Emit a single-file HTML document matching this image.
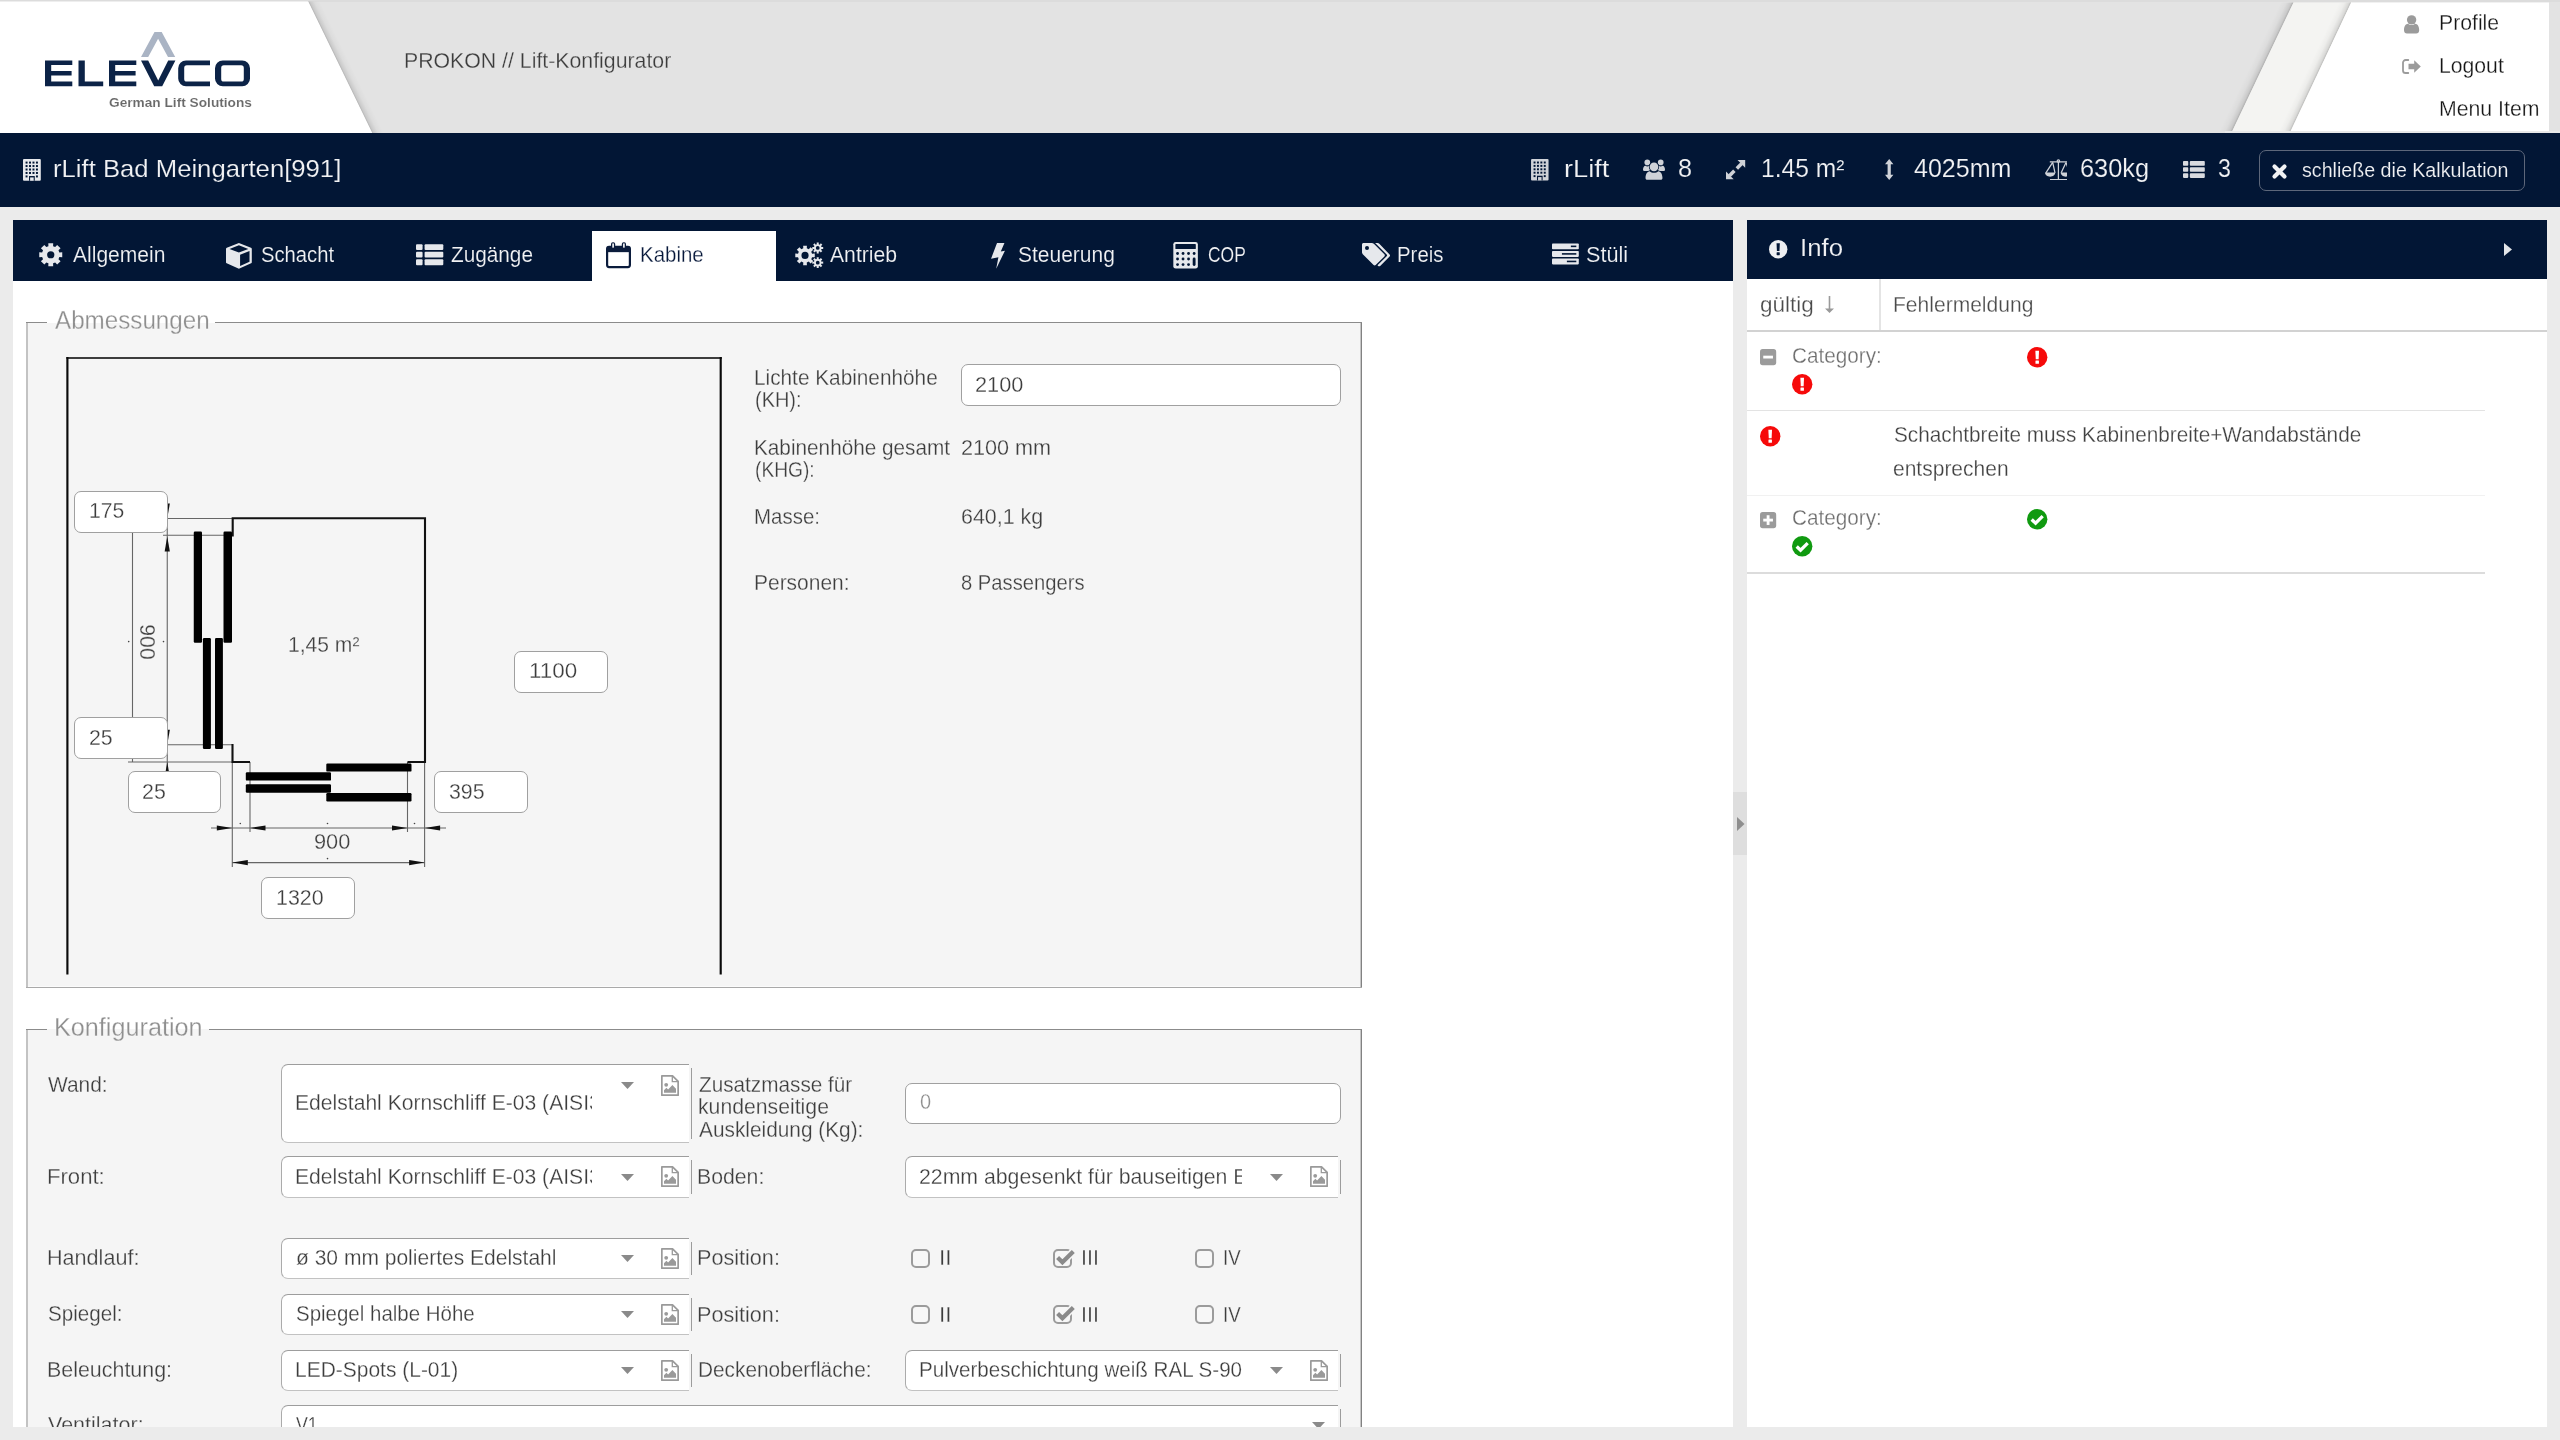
<!DOCTYPE html>
<html><head><meta charset="utf-8"><title>PROKON</title><style>
*{margin:0;padding:0;box-sizing:border-box}
html,body{width:2560px;height:1440px;overflow:hidden;background:#ebebeb;font-family:"Liberation Sans",sans-serif}
.a{position:absolute}
.t{position:absolute;white-space:nowrap;line-height:1;transform-origin:0 0;display:block}
.clip{position:absolute;overflow:hidden}
svg{position:absolute;overflow:visible}
.inp{position:absolute;background:#fff;border:1.8px solid #a0a0a0;border-radius:7px}
.cb{position:absolute;background:#fff;border-top:1.5px solid #9d9d9d;border-bottom:1.5px solid #c2c2c2;border-left:1.5px solid #ababab;border-radius:7px 0 0 7px}
.vl{position:absolute;width:1.5px;background:#9c9c9c}
.chk{position:absolute;width:19px;height:19px;border:2px solid #9b9b9b;border-radius:5px;background:#f7f7f7}
</style></head><body><div class="a" style="left:0;top:0;width:2560px;height:1440px;overflow:hidden">
<div class="a" style="left:0px;top:0px;width:2560px;height:133px;background:#e3e3e3;"></div>
<div class="a" style="left:0px;top:0px;width:2560px;height:1.5px;background:#dcdcdc;"></div>
<svg class="a" style="left:0;top:0" width="2560" height="133" viewBox="0 0 2560 133">
<defs>
<linearGradient id="shL" x1="0" y1="0" x2="1" y2="0"><stop offset="0" stop-color="#000" stop-opacity=".24"/><stop offset=".18" stop-color="#000" stop-opacity=".11"/><stop offset=".55" stop-color="#000" stop-opacity=".03"/><stop offset="1" stop-color="#000" stop-opacity="0"/></linearGradient>
<linearGradient id="shR" x1="1" y1="0" x2="0" y2="0"><stop offset="0" stop-color="#000" stop-opacity=".24"/><stop offset=".18" stop-color="#000" stop-opacity=".11"/><stop offset=".55" stop-color="#000" stop-opacity=".03"/><stop offset="1" stop-color="#000" stop-opacity="0"/></linearGradient>
</defs>
<g transform="translate(308.300 1.400) skewX(25.930)"><rect x="-.5" y="0" width="12" height="131.600" fill="url(#shL)"/></g>
<polygon points="0,1.400 308.300,1.400 372.300,133 0,133" fill="#fff"/>
<g transform="translate(2293.5 2.5) skewX(-25.47)"><rect x="-13" y="0" width="13" height="128.5" fill="url(#shR)"/></g>
<polygon points="2293.5,2.5 2352,2.5 2291,131 2232.3,131" fill="#f4f4f2"/>
<g transform="translate(2351.2 2.5) skewX(-25.21)"><rect x="-12" y="0" width="12" height="128.5" fill="url(#shR)"/></g>
<polygon points="2351.2,2.5 2549,2.5 2549,131 2290.7,131" fill="#fff"/>
<rect x="2225" y="131" width="335" height="2" fill="#e9e9e9"/>
</svg>
<svg class="a" style="left:0;top:0" width="320" height="133" viewBox="0 0 320 133">
<g fill="#0c2347">
<!-- E -->
<path d="M45 60.4h27.3v4.7H51.2v5.8h20.4v4.6H51.2v6.1h21.1v4.7H45z"/>
<!-- L -->
<path d="M78.5 60.4h6.3v21.2h18.4v4.7H78.5z"/>
<!-- E -->
<path d="M109 60.4h27.3v4.7h-21.1v5.8h20.4v4.6h-20.4v6.1h21.1v4.7H109z"/>
<!-- V -->
<path d="M141 60.4h7.2l10 20 10-20h7.2l-13.2 25.9h-8z"/>
<!-- C -->
<path d="M186 60.4h24v4.9h-23.2a2.6 2.6 0 0 0-2.6 2.6v11a2.6 2.6 0 0 0 2.6 2.6H210v4.8h-24a7.8 7.8 0 0 1-7.8-7.8v-10.300000000000001a7.8 7.8 0 0 1 7.8-7.8z"/>
<!-- O -->
<path fill-rule="evenodd" d="M222.8 60.4h19.4a7.8 7.8 0 0 1 7.8 7.8v10.3a7.8 7.8 0 0 1-7.8 7.8h-19.4a7.8 7.8 0 0 1-7.8-7.8v-10.3a7.8 7.8 0 0 1 7.8-7.8zM223.800 65.3a2.600 2.600 0 0 0-2.600 2.600v11.000a2.600 2.600 0 0 0 2.600 2.600h17.400a2.600 2.600 0 0 0 2.600-2.600v-11.000a2.600 2.600 0 0 0-2.600-2.600z"/>
</g>
<!-- caret -->
<path d="M154.5 32h7.200l13.500 25h-7.200l-9.900-18.300-9.900 18.300h-7.200z" fill="#aab4c4"/>
</svg>
<div class="a" style="left:0px;top:133px;width:2560px;height:73.5px;background:#021635;"></div>
<div class="a" style="left:13px;top:220px;width:1720px;height:1207px;background:#fff;"></div>
<div class="a" style="left:13px;top:220px;width:1720px;height:61px;background:#021635;"></div>
<div class="a" style="left:592px;top:231px;width:184px;height:50px;background:#fff;"></div>
<div class="a" style="left:1733px;top:792px;width:14px;height:63px;background:#dedede;"></div>
<svg style="left:1737px;top:817px" width="8" height="14" viewBox="0 0 8 14"><path d="M0 0l7.500 7-7.500 7z" fill="#8e8e8e"/></svg>
<div class="a" style="left:1747px;top:220px;width:800px;height:1207px;background:#fff;"></div>
<div class="a" style="left:1747px;top:220px;width:800px;height:59px;background:#021635;"></div>
<div class="a" style="left:26px;top:322px;width:1336px;height:666px;background:#f5f5f5;"></div>
<div class="a" style="left:26px;top:322px;width:2px;height:666px;background:#c3c3c3;"></div>
<div class="a" style="left:1360.4px;top:322px;width:0.6999999999998181px;height:666px;background:#c6c6c6;"></div>
<div class="a" style="left:1361px;top:322px;width:1.2000000000000455px;height:666px;background:#828282;"></div>
<div class="a" style="left:26px;top:321.7px;width:21px;height:1.6999999999999886px;background:#8b8b8b;"></div>
<div class="a" style="left:215px;top:321.7px;width:1147.2px;height:1.6999999999999886px;background:#8b8b8b;"></div>
<div class="a" style="left:47px;top:321px;width:168px;height:1.5px;background:#fff;"></div>
<div class="a" style="left:28px;top:985.7px;width:1332.4px;height:1.1999999999999318px;background:#fbfbfb;"></div>
<div class="a" style="left:26px;top:986.9px;width:1336.2px;height:1.2000000000000455px;background:#a9a9a9;"></div>
<div class="a" style="left:26px;top:1028.9px;width:1336px;height:399.0999999999999px;background:#f5f5f5;"></div>
<div class="a" style="left:26px;top:1028.9px;width:2px;height:399.0999999999999px;background:#c3c3c3;"></div>
<div class="a" style="left:1360.4px;top:1028.9px;width:0.6999999999998181px;height:399.0999999999999px;background:#c6c6c6;"></div>
<div class="a" style="left:1361px;top:1028.9px;width:1.2000000000000455px;height:399.0999999999999px;background:#828282;"></div>
<div class="a" style="left:26px;top:1028.6000000000001px;width:21px;height:1.7000000000000455px;background:#8b8b8b;"></div>
<div class="a" style="left:209px;top:1028.6000000000001px;width:1153.2px;height:1.7000000000000455px;background:#8b8b8b;"></div>
<div class="a" style="left:47px;top:1027.9px;width:162px;height:1.5px;background:#fff;"></div>
<svg style="left:0;top:0" width="1400" height="1000" viewBox="0 0 1400 1000"><path d="M66.400 358.100H721.800" stroke="#3d3d3d" stroke-width="2" fill="none"/><path d="M67.400 974.500V357.100M720.700 357.100V974.500" stroke="#0a0a0a" stroke-width="2.150" fill="none"/><path stroke="#666" stroke-width="1.100" fill="none" d="M167.500 518.500H232.500M163 535.250H232M167.250 503V770M132.500 533V762M128 762H232.300M167.400 744.800H232.300M232.300 762V867M250 762V832M407.500 762V832M424.600 762V867M211 828H446M232.300 862.600H424.600"/><path stroke="#111" stroke-width="2.100" fill="none" stroke-linejoin="miter" d="M232.700 536.500V518.250H425V762H407.500M232.500 744V762H250"/><path d="M167.25 518.5L164.65 503.50L169.85 503.50Z" fill="#111"/><path d="M167.25 536.5L169.85 551.50L164.65 551.50Z" fill="#111"/><path d="M167.25 744.8L164.65 729.80L169.85 729.80Z" fill="#111"/><path d="M167.25 762L169.85 777.00L164.65 777.00Z" fill="#111"/><path d="M232.3 828L216.80 830.60L216.80 825.40Z" fill="#111"/><path d="M250 828L265.50 825.40L265.50 830.60Z" fill="#111"/><path d="M407.5 828L392.00 830.60L392.00 825.40Z" fill="#111"/><path d="M424.6 828L440.10 825.40L440.10 830.60Z" fill="#111"/><path d="M232.3 862.6L247.80 860.00L247.80 865.20Z" fill="#111"/><path d="M424.6 862.6L409.10 865.20L409.10 860.00Z" fill="#111"/><rect x="193.75" y="531.5" width="8.25" height="111.25" rx="1.200" fill="#000"/><rect x="223.5" y="531.5" width="8.50" height="111.25" rx="1.200" fill="#000"/><rect x="202.9" y="638" width="8.00" height="111.00" rx="1.200" fill="#000"/><rect x="215" y="638" width="7.90" height="111.00" rx="1.200" fill="#000"/><rect x="245.8" y="772.2" width="85.20" height="8.40" rx="1.200" fill="#000"/><rect x="245.8" y="784.3" width="85.20" height="8.40" rx="1.200" fill="#000"/><rect x="326.3" y="763.5" width="85.20" height="8.10" rx="1.200" fill="#000"/><rect x="326.3" y="793.1" width="85.20" height="8.30" rx="1.200" fill="#000"/><circle cx="128.7" cy="641.6" r=".800" fill="#444"/><circle cx="163.5" cy="641.6" r=".800" fill="#444"/><circle cx="240.3" cy="823.5" r=".800" fill="#444"/><circle cx="327.5" cy="823.5" r=".800" fill="#444"/><circle cx="414.5" cy="823.5" r=".800" fill="#444"/><circle cx="327.5" cy="858.6" r=".800" fill="#444"/><circle cx="132.5" cy="532.5" r=".800" fill="#444"/></svg><div class="a" style="left:100px;top:590px;width:100px;height:110px;will-change:transform"><span class="a" style="left:46.700px;top:52px;font-size:22.300px;line-height:1;color:#404040;-webkit-text-stroke:.26px #f5f5f5;white-space:nowrap;transform:translate(-50%,-50%) rotate(90deg) scaleX(.95)">900</span></div>
<div class="inp" style="left:74px;top:490.5px;width:93.5px;height:42.0px"></div>
<div class="inp" style="left:74px;top:717px;width:93.5px;height:42.0px"></div>
<div class="inp" style="left:127.5px;top:770.5px;width:93.5px;height:42.0px"></div>
<div class="inp" style="left:434px;top:770.5px;width:93.5px;height:42.0px"></div>
<div class="inp" style="left:261px;top:877.3px;width:93.5px;height:42.0px"></div>
<div class="inp" style="left:514px;top:650.5px;width:93.5px;height:42.0px"></div>
<div class="inp" style="left:960.5px;top:364.2px;width:380.1px;height:41.5px"></div>
<div class="inp" style="left:905px;top:1083px;width:435.5px;height:40.5px"></div>
<div class="cb" style="left:280.5px;top:1064px;width:408.0px;height:78.5px"></div>
<div class="vl" style="left:690.5px;top:1068px;height:70.5px"></div>
<svg style="left:620.5px;top:1082px" width="13" height="7" viewBox="0 0 13 7" ><path fill="#8a8a8a" d="M0 0h13L6.500 7z"/></svg>
<svg style="left:660.5px;top:1074.5px" width="18" height="21" viewBox="0 0 18 21" ><path fill="none" stroke="#9a9a9a" stroke-width="1.700" stroke-linejoin="round" d="M.85.85h10.700l5.600 5.600v13.700H.85z"/><path fill="none" stroke="#9a9a9a" stroke-width="1.300" d="M11.300 1v5.700H17"/><circle cx="5.200" cy="9.800" r="1.900" fill="#9a9a9a"/><path fill="#9a9a9a" d="M3 17.800v-2.600l2.400-2.400 1.700 1.700 4.300-4.400 3.600 3.700v4z"/></svg>
<div class="cb" style="left:280.5px;top:1156px;width:408.0px;height:41.5px"></div>
<div class="vl" style="left:690.5px;top:1160px;height:33.5px"></div>
<svg style="left:620.5px;top:1173.85px" width="13" height="7" viewBox="0 0 13 7" ><path fill="#8a8a8a" d="M0 0h13L6.500 7z"/></svg>
<svg style="left:660.5px;top:1166.35px" width="18" height="21" viewBox="0 0 18 21" ><path fill="none" stroke="#9a9a9a" stroke-width="1.700" stroke-linejoin="round" d="M.85.85h10.700l5.600 5.600v13.700H.85z"/><path fill="none" stroke="#9a9a9a" stroke-width="1.300" d="M11.300 1v5.700H17"/><circle cx="5.200" cy="9.800" r="1.900" fill="#9a9a9a"/><path fill="#9a9a9a" d="M3 17.800v-2.600l2.400-2.400 1.700 1.700 4.300-4.400 3.600 3.700v4z"/></svg>
<div class="cb" style="left:280.5px;top:1237.5px;width:408.0px;height:41.5px"></div>
<div class="vl" style="left:690.5px;top:1241.5px;height:33.5px"></div>
<svg style="left:620.5px;top:1255.35px" width="13" height="7" viewBox="0 0 13 7" ><path fill="#8a8a8a" d="M0 0h13L6.500 7z"/></svg>
<svg style="left:660.5px;top:1247.85px" width="18" height="21" viewBox="0 0 18 21" ><path fill="none" stroke="#9a9a9a" stroke-width="1.700" stroke-linejoin="round" d="M.85.85h10.700l5.600 5.600v13.700H.85z"/><path fill="none" stroke="#9a9a9a" stroke-width="1.300" d="M11.300 1v5.700H17"/><circle cx="5.200" cy="9.800" r="1.900" fill="#9a9a9a"/><path fill="#9a9a9a" d="M3 17.800v-2.600l2.400-2.400 1.700 1.700 4.300-4.400 3.600 3.700v4z"/></svg>
<div class="cb" style="left:280.5px;top:1293.5px;width:408.0px;height:41.5px"></div>
<div class="vl" style="left:690.5px;top:1297.5px;height:33.5px"></div>
<svg style="left:620.5px;top:1311.35px" width="13" height="7" viewBox="0 0 13 7" ><path fill="#8a8a8a" d="M0 0h13L6.500 7z"/></svg>
<svg style="left:660.5px;top:1303.85px" width="18" height="21" viewBox="0 0 18 21" ><path fill="none" stroke="#9a9a9a" stroke-width="1.700" stroke-linejoin="round" d="M.85.85h10.700l5.600 5.600v13.700H.85z"/><path fill="none" stroke="#9a9a9a" stroke-width="1.300" d="M11.300 1v5.700H17"/><circle cx="5.200" cy="9.800" r="1.900" fill="#9a9a9a"/><path fill="#9a9a9a" d="M3 17.800v-2.600l2.400-2.400 1.700 1.700 4.300-4.400 3.600 3.700v4z"/></svg>
<div class="cb" style="left:280.5px;top:1349.5px;width:408.0px;height:41.5px"></div>
<div class="vl" style="left:690.5px;top:1353.5px;height:33.5px"></div>
<svg style="left:620.5px;top:1367.35px" width="13" height="7" viewBox="0 0 13 7" ><path fill="#8a8a8a" d="M0 0h13L6.500 7z"/></svg>
<svg style="left:660.5px;top:1359.85px" width="18" height="21" viewBox="0 0 18 21" ><path fill="none" stroke="#9a9a9a" stroke-width="1.700" stroke-linejoin="round" d="M.85.85h10.700l5.600 5.600v13.700H.85z"/><path fill="none" stroke="#9a9a9a" stroke-width="1.300" d="M11.300 1v5.700H17"/><circle cx="5.200" cy="9.800" r="1.900" fill="#9a9a9a"/><path fill="#9a9a9a" d="M3 17.800v-2.600l2.400-2.400 1.700 1.700 4.300-4.400 3.600 3.700v4z"/></svg>
<div class="cb" style="left:280.5px;top:1404.5px;width:1057.0px;height:41.5px"></div>
<div class="vl" style="left:1339.5px;top:1408.5px;height:33.5px"></div>
<svg style="left:1312.0px;top:1422.35px" width="13" height="7" viewBox="0 0 13 7" ><path fill="#8a8a8a" d="M0 0h13L6.500 7z"/></svg>
<div class="cb" style="left:905px;top:1156px;width:432.5px;height:41.5px"></div>
<div class="vl" style="left:1339.5px;top:1160px;height:33.5px"></div>
<svg style="left:1269.5px;top:1173.85px" width="13" height="7" viewBox="0 0 13 7" ><path fill="#8a8a8a" d="M0 0h13L6.500 7z"/></svg>
<svg style="left:1309.5px;top:1166.35px" width="18" height="21" viewBox="0 0 18 21" ><path fill="none" stroke="#9a9a9a" stroke-width="1.700" stroke-linejoin="round" d="M.85.85h10.700l5.600 5.600v13.700H.85z"/><path fill="none" stroke="#9a9a9a" stroke-width="1.300" d="M11.300 1v5.700H17"/><circle cx="5.200" cy="9.800" r="1.900" fill="#9a9a9a"/><path fill="#9a9a9a" d="M3 17.800v-2.600l2.400-2.400 1.700 1.700 4.300-4.400 3.600 3.700v4z"/></svg>
<div class="cb" style="left:905px;top:1349.5px;width:432.5px;height:41.5px"></div>
<div class="vl" style="left:1339.5px;top:1353.5px;height:33.5px"></div>
<svg style="left:1269.5px;top:1367.35px" width="13" height="7" viewBox="0 0 13 7" ><path fill="#8a8a8a" d="M0 0h13L6.500 7z"/></svg>
<svg style="left:1309.5px;top:1359.85px" width="18" height="21" viewBox="0 0 18 21" ><path fill="none" stroke="#9a9a9a" stroke-width="1.700" stroke-linejoin="round" d="M.85.85h10.700l5.600 5.600v13.700H.85z"/><path fill="none" stroke="#9a9a9a" stroke-width="1.300" d="M11.300 1v5.700H17"/><circle cx="5.200" cy="9.800" r="1.900" fill="#9a9a9a"/><path fill="#9a9a9a" d="M3 17.800v-2.600l2.400-2.400 1.700 1.700 4.300-4.400 3.600 3.700v4z"/></svg>
<div class="chk" style="left:911px;top:1248.6px"></div>
<div class="chk" style="left:1053px;top:1248.6px"></div>
<svg style="left:1054px;top:1246.6px" width="22" height="20" viewBox="0 0 22 20"><path d="M8.400 15.300L19.300 4.400" fill="none" stroke="#f5f5f5" stroke-width="7.400"/><path d="M3.600 10.500l4.800 4.800L19.300 4.400" fill="none" stroke="#8a8a8a" stroke-width="4.200"/></svg>
<div class="chk" style="left:1194.6px;top:1248.6px"></div>
<div class="chk" style="left:911px;top:1304.8px"></div>
<div class="chk" style="left:1053px;top:1304.8px"></div>
<svg style="left:1054px;top:1302.8px" width="22" height="20" viewBox="0 0 22 20"><path d="M8.400 15.300L19.300 4.400" fill="none" stroke="#f5f5f5" stroke-width="7.400"/><path d="M3.600 10.500l4.800 4.800L19.300 4.400" fill="none" stroke="#8a8a8a" stroke-width="4.200"/></svg>
<div class="chk" style="left:1194.6px;top:1304.8px"></div>
<div class="a" style="left:1747px;top:330px;width:800px;height:2px;background:#d2d2d2;"></div>
<div class="a" style="left:1879px;top:279px;width:1.5px;height:51px;background:#e4e4e4;"></div>
<div class="a" style="left:1747px;top:409.5px;width:737.5px;height:1.5px;background:#e3e3e3;"></div>
<div class="a" style="left:1747px;top:494.5px;width:737.5px;height:1.5px;background:#f1f1f1;"></div>
<div class="a" style="left:1747px;top:572px;width:737.5px;height:1.5px;background:#dcdcdc;"></div>
<svg style="left:1769.2px;top:240.4px" width="18.4" height="18.4" viewBox="0 0 20 20" ><circle cx="10" cy="10" r="10" fill="#eeeff1"/><path fill="#021635" d="M8.200 3.600h3.600l-.4 8.300H8.600z"/><rect x="8.300" y="13.300" width="3.400" height="3.200" rx=".5" fill="#021635"/></svg>
<svg style="left:2503.5px;top:243px" width="8" height="13" viewBox="0 0 8 13" ><path fill="#e3e5e8" d="M0 0l8 6.500-8 6.500z"/></svg>
<svg style="left:1825px;top:296.2px" width="9" height="17" viewBox="0 0 9 17" ><path fill="#9a9a9a" d="M3.700 0h1.600v12.500H9L4.500 17 0 12.500h3.700z"/></svg>
<svg style="left:1760px;top:349.2px" width="16.2" height="16.2" viewBox="0 0 16 16" ><rect x="0" y="0" width="16" height="16" rx="2.600" fill="#9b9b9b"/><rect x="3.200" y="6.600" width="9.600" height="2.800" fill="#fff"/></svg>
<svg style="left:1760px;top:511.6px" width="16.2" height="16.2" viewBox="0 0 16 16" ><rect x="0" y="0" width="16" height="16" rx="2.600" fill="#9b9b9b"/><rect x="3.200" y="6.600" width="9.600" height="2.800" fill="#fff"/><rect x="6.600" y="3.200" width="2.800" height="9.600" fill="#fff"/></svg>
<svg style="left:2026.7px;top:347px" width="20.4" height="20.4" viewBox="0 0 20 20" ><circle cx="10" cy="10" r="10" fill="#f60a0a"/><path fill="#fff" d="M8.200 3.600h3.600l-.4 8.300H8.600z"/><rect x="8.300" y="13.300" width="3.400" height="3.200" rx=".5" fill="#fff"/></svg>
<svg style="left:1792px;top:373.8px" width="20.4" height="20.4" viewBox="0 0 20 20" ><circle cx="10" cy="10" r="10" fill="#f60a0a"/><path fill="#fff" d="M8.200 3.600h3.600l-.4 8.300H8.600z"/><rect x="8.300" y="13.300" width="3.400" height="3.200" rx=".5" fill="#fff"/></svg>
<svg style="left:1760px;top:426.3px" width="20.4" height="20.4" viewBox="0 0 20 20" ><circle cx="10" cy="10" r="10" fill="#f60a0a"/><path fill="#fff" d="M8.200 3.600h3.600l-.4 8.300H8.600z"/><rect x="8.300" y="13.300" width="3.400" height="3.200" rx=".5" fill="#fff"/></svg>
<svg style="left:2026.7px;top:509.2px" width="20.4" height="20.4" viewBox="0 0 20 20" ><circle cx="10" cy="10" r="10" fill="#109a10"/><path fill="none" stroke="#fff" stroke-width="3.200" d="M4.600 10.300l3.800 3.700 7-7"/></svg>
<svg style="left:1792px;top:535.8px" width="20.4" height="20.4" viewBox="0 0 20 20" ><circle cx="10" cy="10" r="10" fill="#109a10"/><path fill="none" stroke="#fff" stroke-width="3.200" d="M4.600 10.300l3.800 3.700 7-7"/></svg>
<svg style="left:2404.2px;top:14.8px" width="15.2" height="18.6" viewBox="0 0 15.200 18.500" ><g fill="#9b9b9b"><circle cx="7.600" cy="4.800" r="4.700"/><path d="M0 15.200C0 11 1.700 8.700 4 8.600c1 .8 2.200 1.300 3.600 1.300s2.600-.5 3.600-1.300c2.300.1 4 2.400 4 6.600 0 2-1.200 3.300-3 3.300H3c-1.800 0-3-1.300-3-3.300z"/></g></svg>
<svg style="left:2401.8px;top:59.3px" width="19" height="15" viewBox="0 0 19 15" ><path fill="none" stroke="#9b9b9b" stroke-width="1.800" stroke-linecap="round" d="M6.300 1H3.600A2.600 2.600 0 0 0 1 3.600v7.800A2.600 2.600 0 0 0 3.600 14h2.700"/><path fill="#9b9b9b" d="M12.200 1.200l6.600 6.300-6.600 6.300v-3.600H6.500V4.800h5.700z"/></svg>
<svg style="left:23px;top:158.7px" width="17.8" height="21.8" viewBox="0 0 18 22" ><path fill="#e6e8ec" d="M1 0h16a1 1 0 0 1 1 1v20a1 1 0 0 1-1 1H1a1 1 0 0 1-1-1V1a1 1 0 0 1 1-1z"/><rect x="2.60" y="2.60" width="2" height="2" fill="#021635"/><rect x="6.10" y="2.60" width="2" height="2" fill="#021635"/><rect x="9.60" y="2.60" width="2" height="2" fill="#021635"/><rect x="13.10" y="2.60" width="2" height="2" fill="#021635"/><rect x="2.60" y="6.10" width="2" height="2" fill="#021635"/><rect x="6.10" y="6.10" width="2" height="2" fill="#021635"/><rect x="9.60" y="6.10" width="2" height="2" fill="#021635"/><rect x="13.10" y="6.10" width="2" height="2" fill="#021635"/><rect x="2.60" y="9.60" width="2" height="2" fill="#021635"/><rect x="6.10" y="9.60" width="2" height="2" fill="#021635"/><rect x="9.60" y="9.60" width="2" height="2" fill="#021635"/><rect x="13.10" y="9.60" width="2" height="2" fill="#021635"/><rect x="2.60" y="13.10" width="2" height="2" fill="#021635"/><rect x="6.10" y="13.10" width="2" height="2" fill="#021635"/><rect x="9.60" y="13.10" width="2" height="2" fill="#021635"/><rect x="13.10" y="13.10" width="2" height="2" fill="#021635"/><rect x="2.60" y="16.60" width="2" height="2" fill="#021635"/><rect x="13.10" y="16.60" width="2" height="2" fill="#021635"/><rect x="6.1" y="17.2" width="5.8" height="4.8" fill="#021635"/><rect x="7.2" y="18.6" width="3.600" height="3.4" fill="#e6e8ec"/></svg>
<svg style="left:1530.5px;top:158.7px" width="17.6" height="21.4" viewBox="0 0 18 22" ><path fill="#cfd2d8" d="M1 0h16a1 1 0 0 1 1 1v20a1 1 0 0 1-1 1H1a1 1 0 0 1-1-1V1a1 1 0 0 1 1-1z"/><rect x="2.60" y="2.60" width="2" height="2" fill="#021635"/><rect x="6.10" y="2.60" width="2" height="2" fill="#021635"/><rect x="9.60" y="2.60" width="2" height="2" fill="#021635"/><rect x="13.10" y="2.60" width="2" height="2" fill="#021635"/><rect x="2.60" y="6.10" width="2" height="2" fill="#021635"/><rect x="6.10" y="6.10" width="2" height="2" fill="#021635"/><rect x="9.60" y="6.10" width="2" height="2" fill="#021635"/><rect x="13.10" y="6.10" width="2" height="2" fill="#021635"/><rect x="2.60" y="9.60" width="2" height="2" fill="#021635"/><rect x="6.10" y="9.60" width="2" height="2" fill="#021635"/><rect x="9.60" y="9.60" width="2" height="2" fill="#021635"/><rect x="13.10" y="9.60" width="2" height="2" fill="#021635"/><rect x="2.60" y="13.10" width="2" height="2" fill="#021635"/><rect x="6.10" y="13.10" width="2" height="2" fill="#021635"/><rect x="9.60" y="13.10" width="2" height="2" fill="#021635"/><rect x="13.10" y="13.10" width="2" height="2" fill="#021635"/><rect x="2.60" y="16.60" width="2" height="2" fill="#021635"/><rect x="13.10" y="16.60" width="2" height="2" fill="#021635"/><rect x="6.1" y="17.2" width="5.8" height="4.8" fill="#021635"/><rect x="7.2" y="18.6" width="3.600" height="3.4" fill="#cfd2d8"/></svg>
<svg style="left:1642.5px;top:158.7px" width="22" height="21" viewBox="0 0 22.600 21.200" ><g fill="#cfd2d8"><circle cx="4.400" cy="3.300" r="2.900"/><circle cx="18.200" cy="3.300" r="2.900"/><path d="M0 11.200c0-2.800 1-4.300 2.600-4.400 1.100.9 2.500.9 3.600 0 .5 0 .9.200 1.300.5v4.800H1.300C.500 12.100 0 11.800 0 11.200z"/><path d="M22.600 11.200c0-2.800-1-4.300-2.600-4.400-1.100.9-2.500.9-3.600 0-.5 0-.9.200-1.300.5v4.800h6.200c.8 0 1.300-.3 1.300-.9z"/></g><circle cx="11.300" cy="7.900" r="5.300" fill="#021635"/><path d="M1.700 21.800c0-5.500 2.400-9.800 5.200-10.400h8.800c2.800.6 5.200 4.900 5.200 10.400z" fill="#021635"/><g fill="#cfd2d8"><circle cx="11.300" cy="7.900" r="4.500"/><path d="M4.300 21.200c-1 0-1.700-.7-1.700-1.800 0-3.900 1.700-6.900 4.300-7.100 1.200 1.100 2.700 1.700 4.400 1.700s3.200-.6 4.400-1.700c2.600.2 4.300 3.200 4.300 7.100 0 1.100-.7 1.800-1.700 1.800z"/></g></svg>
<svg style="left:1726.1px;top:160px" width="19.2" height="19.2" viewBox="0 0 19 19" ><path fill="#cfd2d8" d="M19 0v7.600L11.400 0z"/><path stroke="#cfd2d8" stroke-width="3.500" d="M15.600 3.400L10.700 8.300"/><path fill="#cfd2d8" d="M0 19v-7.600L7.600 19z"/><path stroke="#cfd2d8" stroke-width="3.500" d="M3.400 15.600L8.300 10.700"/></svg>
<svg style="left:1885px;top:158.8px" width="8.4" height="21" viewBox="0 0 8.400 21" ><path fill="#cfd2d8" d="M4.200 0l4.200 5.200H5.800v10.600h2.600L4.200 21 0 15.800h2.600V5.200H0z"/></svg>
<svg style="left:2045px;top:158.7px;overflow:hidden" width="22" height="21.4" viewBox="0 0 22 21"><g fill="none" stroke="#cfd2d8" stroke-width="1.250"><path d="M4.800 2.600H22M13.400 3.200V20.400M5 20.500H22"/><path d="M7.700 3.200L.900 13.600M7.700 3.200L10 13.600M21 3.200L16.200 13.600M21 3.200L24.500 13.600"/><circle cx="13.400" cy="1.900" r="1.200"/></g><path fill="#cfd2d8" d="M0 13.400h10.300c0 2.400-2.300 4.100-5.150 4.100S0 15.800 0 13.400zM15.700 13.400H26c0 2.400-2.300 4.100-5.150 4.100s-5.150-1.700-5.150-4.100z"/></svg>
<svg style="left:2182.5px;top:160.5px" width="21.8" height="17" viewBox="0 0 27 20.8" ><g fill="#d9dbe0"><rect x="0" y="0.0" width="6.500" height="5.800" rx="1"/><rect x="8.500" y="0.0" width="18.500" height="5.800" rx="1"/><rect x="0" y="7.5" width="6.500" height="5.800" rx="1"/><rect x="8.500" y="7.5" width="18.500" height="5.800" rx="1"/><rect x="0" y="15.0" width="6.500" height="5.800" rx="1"/><rect x="8.500" y="15.0" width="18.500" height="5.800" rx="1"/></g></svg>
<div class="a" style="left:2258.500px;top:149.500px;width:266px;height:41.500px;border:1.500px solid #5d677a;border-radius:7px"></div>
<svg style="left:2272px;top:163.5px" width="15" height="15" viewBox="0 0 15 15" ><path stroke="#f1f2f4" stroke-width="4.200" stroke-linecap="round" d="M2.500 2.500l10 10M12.500 2.500l-10 10"/></svg>
<svg style="left:38.7px;top:243.2px" width="23.5" height="23.5" viewBox="0 0 24 24" ><path fill-rule="evenodd" fill="#e6e8ec" d="M20.78 9.60 L23.74 9.52 L23.74 14.48 L20.78 14.40 L19.90 16.51 L22.06 18.55 L18.55 22.06 L16.51 19.90 L14.40 20.78 L14.48 23.74 L9.52 23.74 L9.60 20.78 L7.49 19.90 L5.45 22.06 L1.94 18.55 L4.10 16.51 L3.22 14.40 L0.26 14.48 L0.26 9.52 L3.22 9.60 L4.10 7.49 L1.94 5.45 L5.45 1.94 L7.49 4.10 L9.60 3.22 L9.52 0.26 L14.48 0.26 L14.40 3.22 L16.51 4.10 L18.55 1.94 L22.06 5.45 L19.90 7.49ZM15.70 12.00A3.7 3.7 0 1 0 8.30 12.00A3.7 3.7 0 1 0 15.70 12.00Z"/></svg>
<svg style="left:226.2px;top:243px" width="25.8" height="25.8" viewBox="0 0 26 26" ><path fill="#e6e8ec" fill-rule="evenodd" d="M13 0l12.200 4.700c.5.200.8.600.8 1.100v13.500c0 .5-.3.900-.7 1.100L13 26 .7 20.400c-.4-.2-.7-.6-.7-1.100V5.800c0-.5.300-.9.800-1.100zM13 2.300L3.500 6 13 9.700 22.500 6zM14.200 11.800v11.300l9.500-4.300V8z"/></svg>
<svg style="left:415.7px;top:243.7px" width="27.3" height="21.3" viewBox="0 0 27 20.8" ><g fill="#e6e8ec"><rect x="0" y="0.0" width="6.500" height="5.800" rx="1"/><rect x="8.500" y="0.0" width="18.500" height="5.800" rx="1"/><rect x="0" y="7.5" width="6.500" height="5.800" rx="1"/><rect x="8.500" y="7.5" width="18.500" height="5.800" rx="1"/><rect x="0" y="15.0" width="6.500" height="5.800" rx="1"/><rect x="8.500" y="15.0" width="18.500" height="5.800" rx="1"/></g></svg>
<svg style="left:606.2px;top:241.7px" width="25" height="26.3" viewBox="0 0 25 26" ><g fill="none" stroke="#0b1c3c" stroke-width="2.200" stroke-linejoin="round"><rect x="1.100" y="4.600" width="22.800" height="20.300" rx="2"/></g><rect x="1.100" y="4.600" width="22.800" height="5.400" fill="#0b1c3c"/><rect x="5" y="0" width="4.200" height="7.600" rx="1.800" fill="#0b1c3c"/><rect x="15.800" y="0" width="4.200" height="7.600" rx="1.800" fill="#0b1c3c"/><rect x="6.300" y="1.300" width="1.600" height="4.200" fill="#fff"/><rect x="17.100" y="1.300" width="1.600" height="4.200" fill="#fff"/></svg>
<svg style="left:794.5px;top:241.7px" width="28.5" height="26.3" viewBox="0 0 28.5 26.5" ><path fill-rule="evenodd" fill="#e6e8ec" d="M17.08 11.74 L19.82 11.61 L19.82 15.39 L17.08 15.26 L16.25 17.27 L18.28 19.11 L15.61 21.78 L13.77 19.75 L11.76 20.58 L11.89 23.32 L8.11 23.32 L8.24 20.58 L6.23 19.75 L4.39 21.78 L1.72 19.11 L3.75 17.27 L2.92 15.26 L0.18 15.39 L0.18 11.61 L2.92 11.74 L3.75 9.73 L1.72 7.89 L4.39 5.22 L6.23 7.25 L8.24 6.42 L8.11 3.68 L11.89 3.68 L11.76 6.42 L13.77 7.25 L15.61 5.22 L18.28 7.89 L16.25 9.73ZM13.60 13.50A3.6 3.6 0 1 0 6.40 13.50A3.6 3.6 0 1 0 13.60 13.50ZM26.58 5.06 L28.30 4.94 L28.30 7.06 L26.58 6.94 L26.14 8.01 L27.44 9.14 L25.94 10.64 L24.81 9.34 L23.74 9.78 L23.86 11.50 L21.74 11.50 L21.86 9.78 L20.79 9.34 L19.66 10.64 L18.16 9.14 L19.46 8.01 L19.02 6.94 L17.30 7.06 L17.30 4.94 L19.02 5.06 L19.46 3.99 L18.16 2.86 L19.66 1.36 L20.79 2.66 L21.86 2.22 L21.74 0.50 L23.86 0.50 L23.74 2.22 L24.81 2.66 L25.94 1.36 L27.44 2.86 L26.14 3.99ZM24.70 6.00A1.9 1.9 0 1 0 20.90 6.00A1.9 1.9 0 1 0 24.70 6.00ZM26.58 19.86 L28.30 19.74 L28.30 21.86 L26.58 21.74 L26.14 22.81 L27.44 23.94 L25.94 25.44 L24.81 24.14 L23.74 24.58 L23.86 26.30 L21.74 26.30 L21.86 24.58 L20.79 24.14 L19.66 25.44 L18.16 23.94 L19.46 22.81 L19.02 21.74 L17.30 21.86 L17.30 19.74 L19.02 19.86 L19.46 18.79 L18.16 17.66 L19.66 16.16 L20.79 17.46 L21.86 17.02 L21.74 15.30 L23.86 15.30 L23.74 17.02 L24.81 17.46 L25.94 16.16 L27.44 17.66 L26.14 18.79ZM24.70 20.80A1.9 1.9 0 1 0 20.90 20.80A1.9 1.9 0 1 0 24.70 20.80Z"/></svg>
<svg style="left:990.5px;top:243px" width="14" height="25.8" viewBox="0 0 14 26" ><path fill="#e6e8ec" d="M6 0h7.500L9.800 8.600l4.200-.9L5.200 26l2.200-11.700L0 15.800z"/></svg>
<svg style="left:1173px;top:241.7px" width="25.2" height="26.5" viewBox="0 0 25 27" ><rect x="0" y="0" width="25" height="27" rx="2.400" fill="#e6e8ec"/><rect x="2.100" y="2.100" width="20.800" height="5.100" rx=".6" fill="#021635"/><circle cx="4.3" cy="11.7" r="1.450" fill="#021635"/><circle cx="9.9" cy="11.7" r="1.450" fill="#021635"/><circle cx="15.5" cy="11.7" r="1.450" fill="#021635"/><circle cx="21.2" cy="11.7" r="1.450" fill="#021635"/><circle cx="4.3" cy="17.3" r="1.450" fill="#021635"/><circle cx="9.9" cy="17.3" r="1.450" fill="#021635"/><circle cx="15.5" cy="17.3" r="1.450" fill="#021635"/><circle cx="4.3" cy="23" r="1.450" fill="#021635"/><circle cx="9.9" cy="23" r="1.450" fill="#021635"/><circle cx="15.5" cy="23" r="1.450" fill="#021635"/><rect x="19.750" y="15.850" width="2.900" height="8.600" rx="1.400" fill="#021635"/></svg>
<svg style="left:1362px;top:243px" width="28.8" height="24" viewBox="0 0 28.800 24" ><path fill="#e6e8ec" d="M0 1.500C0 .7.700 0 1.500 0h8.200c.8 0 1.800.4 2.400 1l10.300 10.300c.6.600.6 1.500 0 2.100l-8.700 8.700c-.6.600-1.500.6-2.100 0L1.300 11.800C.600 11.200 0 10.100 0 9.300z"/><circle cx="5" cy="5" r="2" fill="#021635"/><path fill="#e6e8ec" d="M15.600 0h-2.500l11.800 11.800c.3.300.3.800 0 1.100L15.500 22.300l.6.600c.6.600 1.500.6 2.100 0l9.400-9.400c.6-.6.600-1.500 0-2.100L17.300.800C16.900.300 16.200 0 15.600 0z"/></svg>
<svg style="left:1552px;top:243.2px" width="26.8" height="21.8" viewBox="0 0 27 21.200" ><g fill="#e6e8ec"><rect x="0" y="0.0" width="27" height="6" rx=".8"/><rect x="0" y="7.6" width="27" height="6" rx=".8"/><rect x="0" y="15.2" width="27" height="6" rx=".8"/></g><rect x="19" y="2.2" width="5.5" height="1.600" fill="#021635"/><rect x="10" y="9.8" width="14.5" height="1.600" fill="#021635"/><rect x="15" y="17.4" width="9.5" height="1.600" fill="#021635"/></svg>
<div class="a" style="left:0;top:0;width:2560px;height:1440px;will-change:transform">
<span class="t" style="left:404.04px;top:49.00px;font-size:22.8px;color:#3c3c3c;transform:scaleX(0.9333);-webkit-text-stroke:0.26px #e3e3e3;">PROKON // Lift-Konfigurator</span>
<span class="t" style="left:2438.54px;top:13.00px;font-size:21.5px;color:#151515;transform:scaleX(0.9865);-webkit-text-stroke:0.26px #fff;">Profile</span>
<span class="t" style="left:2438.55px;top:56.00px;font-size:21.5px;color:#151515;transform:scaleX(0.9851);-webkit-text-stroke:0.26px #fff;">Logout</span>
<span class="t" style="left:2438.54px;top:99.00px;font-size:21.5px;color:#151515;transform:scaleX(0.9891);-webkit-text-stroke:0.26px #fff;">Menu Item</span>
<span class="t" style="left:108.97px;top:96.00px;font-size:13.6px;color:#6a6a6a;transform:scaleX(1.0066);font-weight:bold;-webkit-text-stroke:0.1px #fff;">German Lift Solutions</span>
<span class="t" style="left:53.49px;top:157.00px;font-size:24.2px;color:#f1f2f4;transform:scaleX(1.0614);-webkit-text-stroke:0.15px #021635;">rLift Bad Meingarten[991]</span>
<span class="t" style="left:1563.70px;top:157.00px;font-size:24.2px;color:#f1f2f4;transform:scaleX(1.1243);-webkit-text-stroke:0.15px #021635;">rLift</span>
<span class="t" style="left:1677.86px;top:156.00px;font-size:25.6px;color:#f1f2f4;transform:scaleX(0.9879);-webkit-text-stroke:0.15px #021635;">8</span>
<span class="t" style="left:1760.86px;top:156.00px;font-size:25.6px;color:#f1f2f4;transform:scaleX(0.9611);-webkit-text-stroke:0.15px #021635;">1.45 m²</span>
<span class="t" style="left:1914.26px;top:156.00px;font-size:25.6px;color:#f1f2f4;transform:scaleX(0.9783);-webkit-text-stroke:0.15px #021635;">4025mm</span>
<span class="t" style="left:2080.21px;top:156.00px;font-size:25.6px;color:#f1f2f4;transform:scaleX(0.9909);-webkit-text-stroke:0.15px #021635;">630kg</span>
<span class="t" style="left:2218.42px;top:156.00px;font-size:25.6px;color:#f1f2f4;transform:scaleX(0.9073);-webkit-text-stroke:0.15px #021635;">3</span>
<span class="t" style="left:2301.84px;top:161.00px;font-size:19.6px;color:#f1f2f4;transform:scaleX(1.0024);-webkit-text-stroke:0.15px #021635;">schließe die Kalkulation</span>
<span class="t" style="left:72.90px;top:244.00px;font-size:21.6px;color:#f1f2f4;transform:scaleX(0.9745);-webkit-text-stroke:0.15px #021635;">Allgemein</span>
<span class="t" style="left:261.02px;top:244.00px;font-size:21.6px;color:#f1f2f4;transform:scaleX(0.9361);-webkit-text-stroke:0.15px #021635;">Schacht</span>
<span class="t" style="left:450.50px;top:244.00px;font-size:21.6px;color:#f1f2f4;transform:scaleX(0.9615);-webkit-text-stroke:0.15px #021635;">Zugänge</span>
<span class="t" style="left:830.40px;top:244.00px;font-size:21.6px;color:#f1f2f4;transform:scaleX(0.9806);-webkit-text-stroke:0.15px #021635;">Antrieb</span>
<span class="t" style="left:1018.49px;top:244.00px;font-size:21.6px;color:#f1f2f4;transform:scaleX(0.9715);-webkit-text-stroke:0.15px #021635;">Steuerung</span>
<span class="t" style="left:1208.33px;top:244.00px;font-size:21.6px;color:#f1f2f4;transform:scaleX(0.8076);-webkit-text-stroke:0.15px #021635;">COP</span>
<span class="t" style="left:1397.06px;top:244.00px;font-size:21.6px;color:#f1f2f4;transform:scaleX(0.9445);-webkit-text-stroke:0.15px #021635;">Preis</span>
<span class="t" style="left:1586.47px;top:244.00px;font-size:21.6px;color:#f1f2f4;transform:scaleX(1.0020);-webkit-text-stroke:0.15px #021635;">Stüli</span>
<span class="t" style="left:640.05px;top:244.00px;font-size:21.6px;color:#07183a;transform:scaleX(0.9468);-webkit-text-stroke:0.26px #fff;">Kabine</span>
<span class="t" style="left:1799.63px;top:236.00px;font-size:24.2px;color:#f1f2f4;transform:scaleX(1.0669);-webkit-text-stroke:0.15px #021635;">Info</span>
<span class="t" style="left:1760.45px;top:295.00px;font-size:21.5px;color:#4a4a4a;transform:scaleX(1.0450);-webkit-text-stroke:0.26px #fff;">gültig</span>
<span class="t" style="left:1893.01px;top:295.00px;font-size:21.5px;color:#4a4a4a;transform:scaleX(0.9785);-webkit-text-stroke:0.26px #fff;">Fehlermeldung</span>
<span class="t" style="left:1791.93px;top:346.00px;font-size:21.5px;color:#6f6f6f;transform:scaleX(0.9639);-webkit-text-stroke:0.26px #fff;">Category:</span>
<span class="t" style="left:1893.50px;top:425.00px;font-size:21.5px;color:#404040;transform:scaleX(0.9657);-webkit-text-stroke:0.26px #fff;">Schachtbreite muss Kabinenbreite+Wandabstände</span>
<span class="t" style="left:1893.49px;top:459.00px;font-size:21.5px;color:#404040;transform:scaleX(0.9768);-webkit-text-stroke:0.26px #fff;">entsprechen</span>
<span class="t" style="left:1791.93px;top:508.00px;font-size:21.5px;color:#6f6f6f;transform:scaleX(0.9639);-webkit-text-stroke:0.26px #fff;">Category:</span>
<span class="t" style="left:55.00px;top:308.00px;font-size:25.4px;color:#8f8f8f;transform:scaleX(0.9530);-webkit-text-stroke:0.26px #fafafa;">Abmessungen</span>
<span class="t" style="left:53.83px;top:1015.00px;font-size:25.4px;color:#8f8f8f;transform:scaleX(0.9927);-webkit-text-stroke:0.26px #fafafa;">Konfiguration</span>
<span class="t" style="left:754.28px;top:368.00px;font-size:21.5px;color:#3d3d3d;transform:scaleX(0.9665);-webkit-text-stroke:0.26px #f5f5f5;">Lichte Kabinenhöhe</span>
<span class="t" style="left:754.97px;top:390.00px;font-size:21.5px;color:#3d3d3d;transform:scaleX(0.9267);-webkit-text-stroke:0.26px #f5f5f5;">(KH):</span>
<span class="t" style="left:975.13px;top:374.00px;font-size:22.3px;color:#3d3d3d;transform:scaleX(0.9738);-webkit-text-stroke:0.26px #fff;">2100</span>
<span class="t" style="left:754.28px;top:438.00px;font-size:21.5px;color:#3d3d3d;transform:scaleX(0.9648);-webkit-text-stroke:0.26px #f5f5f5;">Kabinenhöhe gesamt</span>
<span class="t" style="left:755.00px;top:460.00px;font-size:21.5px;color:#3d3d3d;transform:scaleX(0.8916);-webkit-text-stroke:0.26px #f5f5f5;">(KHG):</span>
<span class="t" style="left:960.64px;top:438.00px;font-size:21.5px;color:#3d3d3d;transform:scaleX(1.0057);-webkit-text-stroke:0.26px #f5f5f5;">2100 mm</span>
<span class="t" style="left:754.30px;top:507.00px;font-size:21.5px;color:#3d3d3d;transform:scaleX(0.9516);-webkit-text-stroke:0.26px #f5f5f5;">Masse:</span>
<span class="t" style="left:960.65px;top:507.00px;font-size:21.5px;color:#3d3d3d;transform:scaleX(0.9967);-webkit-text-stroke:0.26px #f5f5f5;">640,1 kg</span>
<span class="t" style="left:753.56px;top:573.00px;font-size:21.5px;color:#3d3d3d;transform:scaleX(0.9747);-webkit-text-stroke:0.26px #f5f5f5;">Personen:</span>
<span class="t" style="left:961.37px;top:573.00px;font-size:21.5px;color:#3d3d3d;transform:scaleX(0.9406);-webkit-text-stroke:0.26px #f5f5f5;">8 Passengers</span>
<span class="t" style="left:89.08px;top:500.00px;font-size:22.3px;color:#3d3d3d;transform:scaleX(0.9482);-webkit-text-stroke:0.26px #fff;">175</span>
<span class="t" style="left:89.00px;top:727.00px;font-size:22.3px;color:#3d3d3d;transform:scaleX(0.9538);-webkit-text-stroke:0.26px #fff;">25</span>
<span class="t" style="left:142.30px;top:781.00px;font-size:22.3px;color:#3d3d3d;transform:scaleX(0.9582);-webkit-text-stroke:0.26px #fff;">25</span>
<span class="t" style="left:449.13px;top:781.00px;font-size:22.3px;color:#3d3d3d;transform:scaleX(0.9549);-webkit-text-stroke:0.26px #fff;">395</span>
<span class="t" style="left:275.66px;top:887.00px;font-size:22.3px;color:#3d3d3d;transform:scaleX(0.9589);-webkit-text-stroke:0.26px #fff;">1320</span>
<span class="t" style="left:528.80px;top:660.00px;font-size:22.3px;color:#3d3d3d;transform:scaleX(1.0042);-webkit-text-stroke:0.26px #fff;">1100</span>
<span class="t" style="left:287.83px;top:635.00px;font-size:21.5px;color:#404040;transform:scaleX(0.9799);-webkit-text-stroke:0.26px #f5f5f5;">1,45 m²</span>
<span class="t" style="left:314.28px;top:831.00px;font-size:22.3px;color:#404040;transform:scaleX(0.9774);-webkit-text-stroke:0.26px #f5f5f5;">900</span>
<span class="t" style="left:48.40px;top:1075.00px;font-size:21.5px;color:#3d3d3d;transform:scaleX(0.9723);-webkit-text-stroke:0.26px #f5f5f5;">Wand:</span>
<div class="clip" style="left:295px;top:1089.00px;width:297px;height:31.50px"><span class="t" style="left:-0.50px;top:4px;font-size:21.5px;color:#3d3d3d;transform:scaleX(0.9815);-webkit-text-stroke:0.26px #fff;">Edelstahl Kornschliff E-03 (AISI304)</span></div>
<span class="t" style="left:46.67px;top:1167.00px;font-size:21.5px;color:#3d3d3d;transform:scaleX(1.0279);-webkit-text-stroke:0.26px #f5f5f5;">Front:</span>
<div class="clip" style="left:295px;top:1163.00px;width:297px;height:31.50px"><span class="t" style="left:-0.50px;top:4px;font-size:21.5px;color:#3d3d3d;transform:scaleX(0.9815);-webkit-text-stroke:0.26px #fff;">Edelstahl Kornschliff E-03 (AISI304)</span></div>
<span class="t" style="left:46.71px;top:1248.00px;font-size:21.5px;color:#3d3d3d;transform:scaleX(1.0038);-webkit-text-stroke:0.26px #f5f5f5;">Handlauf:</span>
<span class="t" style="left:295.82px;top:1248.00px;font-size:21.5px;color:#3d3d3d;transform:scaleX(0.9775);-webkit-text-stroke:0.26px #fff;">ø 30 mm poliertes Edelstahl</span>
<span class="t" style="left:47.76px;top:1304.00px;font-size:21.5px;color:#3d3d3d;transform:scaleX(0.9590);-webkit-text-stroke:0.26px #f5f5f5;">Spiegel:</span>
<span class="t" style="left:295.51px;top:1304.00px;font-size:21.5px;color:#3d3d3d;transform:scaleX(0.9523);-webkit-text-stroke:0.26px #fff;">Spiegel halbe Höhe</span>
<span class="t" style="left:46.93px;top:1360.00px;font-size:21.5px;color:#3d3d3d;transform:scaleX(0.9960);-webkit-text-stroke:0.26px #f5f5f5;">Beleuchtung:</span>
<span class="t" style="left:294.51px;top:1360.00px;font-size:21.5px;color:#3d3d3d;transform:scaleX(0.9754);-webkit-text-stroke:0.26px #fff;">LED-Spots (L-01)</span>
<div class="clip" style="left:40px;top:1411.00px;width:160px;height:16.00px"><span class="t" style="left:8.40px;top:4px;font-size:21.5px;color:#3d3d3d;transform:scaleX(1.0003);-webkit-text-stroke:0.26px #f5f5f5;">Ventilator:</span></div>
<div class="clip" style="left:290px;top:1411.00px;width:110px;height:16.00px"><span class="t" style="left:6.15px;top:4px;font-size:21.5px;color:#3d3d3d;transform:scaleX(0.8240);-webkit-text-stroke:0.26px #fff;">V1</span></div>
<span class="t" style="left:698.50px;top:1075.00px;font-size:21.5px;color:#3d3d3d;transform:scaleX(0.9644);-webkit-text-stroke:0.26px #f5f5f5;">Zusatzmasse für</span>
<span class="t" style="left:697.82px;top:1097.00px;font-size:21.5px;color:#3d3d3d;transform:scaleX(0.9868);-webkit-text-stroke:0.26px #f5f5f5;">kundenseitige</span>
<span class="t" style="left:699.15px;top:1120.00px;font-size:21.5px;color:#3d3d3d;transform:scaleX(0.9687);-webkit-text-stroke:0.26px #f5f5f5;">Auskleidung (Kg):</span>
<span class="t" style="left:919.77px;top:1091.00px;font-size:22.3px;color:#8f8f8f;transform:scaleX(0.8969);-webkit-text-stroke:0.26px #fff;">0</span>
<span class="t" style="left:697.49px;top:1167.00px;font-size:21.5px;color:#3d3d3d;transform:scaleX(0.9881);-webkit-text-stroke:0.26px #f5f5f5;">Boden:</span>
<div class="clip" style="left:918px;top:1163.00px;width:323.5px;height:31.50px"><span class="t" style="left:1.40px;top:4px;font-size:21.5px;color:#3d3d3d;transform:scaleX(0.9888);-webkit-text-stroke:0.26px #fff;">22mm abgesenkt für bauseitigen Estrich</span></div>
<span class="t" style="left:697.46px;top:1248.00px;font-size:21.5px;color:#3d3d3d;transform:scaleX(1.0052);-webkit-text-stroke:0.26px #f5f5f5;">Position:</span>
<span class="t" style="left:697.46px;top:1305.00px;font-size:21.5px;color:#3d3d3d;transform:scaleX(1.0052);-webkit-text-stroke:0.26px #f5f5f5;">Position:</span>
<span class="t" style="left:939.38px;top:1248.00px;font-size:21.5px;color:#3d3d3d;transform:scaleX(1.0511);-webkit-text-stroke:0.26px #f5f5f5;">II</span>
<span class="t" style="left:1081.23px;top:1248.00px;font-size:21.5px;color:#3d3d3d;transform:scaleX(0.9966);-webkit-text-stroke:0.26px #f5f5f5;">III</span>
<span class="t" style="left:1222.69px;top:1248.00px;font-size:21.5px;color:#3d3d3d;transform:scaleX(0.8672);-webkit-text-stroke:0.26px #f5f5f5;">IV</span>
<span class="t" style="left:939.38px;top:1305.00px;font-size:21.5px;color:#3d3d3d;transform:scaleX(1.0511);-webkit-text-stroke:0.26px #f5f5f5;">II</span>
<span class="t" style="left:1081.23px;top:1305.00px;font-size:21.5px;color:#3d3d3d;transform:scaleX(0.9966);-webkit-text-stroke:0.26px #f5f5f5;">III</span>
<span class="t" style="left:1222.69px;top:1305.00px;font-size:21.5px;color:#3d3d3d;transform:scaleX(0.8672);-webkit-text-stroke:0.26px #f5f5f5;">IV</span>
<span class="t" style="left:697.52px;top:1360.00px;font-size:21.5px;color:#3d3d3d;transform:scaleX(0.9678);-webkit-text-stroke:0.26px #f5f5f5;">Deckenoberfläche:</span>
<div class="clip" style="left:918px;top:1356.00px;width:323.5px;height:31.50px"><span class="t" style="left:0.79px;top:4px;font-size:21.5px;color:#3d3d3d;transform:scaleX(0.9575);-webkit-text-stroke:0.26px #fff;">Pulverbeschichtung weiß RAL S-9003</span></div>
</div>
<div class="a" style="left:0px;top:1427px;width:2560px;height:13px;background:#ebebeb;"></div>
</div></body></html>
